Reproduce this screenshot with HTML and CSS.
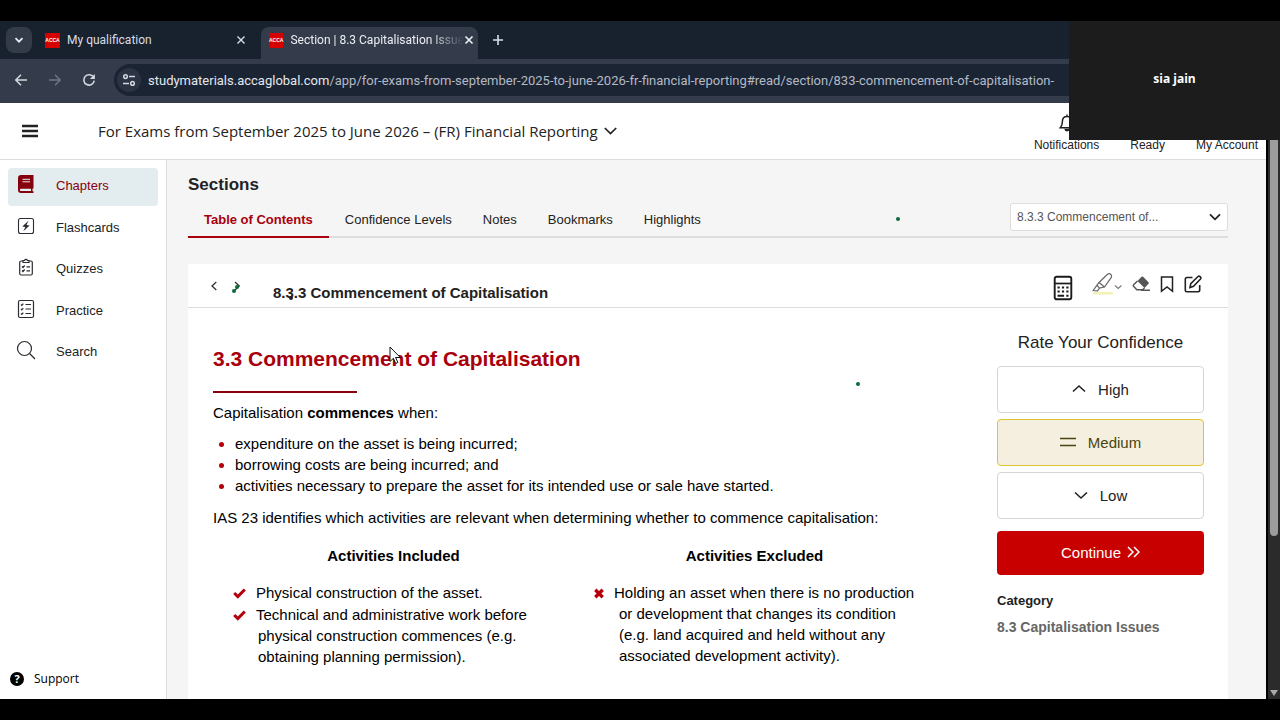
FILE: index.html
```
<!DOCTYPE html>
<html lang="en">
<head>
    <meta charset="UTF-8">
    <meta name="viewport" content="width=device-width, initial-scale=1.0">
    <title>Section | 8.3 Capitalisation Issues</title>
    <link rel="stylesheet" href="styles.css">
</head>

<body>
    <!-- Browser tabs -->
    <div class="tab-strip">
        <button class="tab-search" aria-label="Search tabs">
            <svg width="10" height="10" viewBox="0 0 10 10"><path d="M1.5 3.2 5 6.7 8.5 3.2" fill="none" stroke="#e8ebf0" stroke-width="1.8"/></svg>
        </button>
        <div class="browser-tab">
            <span class="favicon">ACCA</span>
            <span class="tab-title">My qualification</span>
            <button class="plain" aria-label="Close tab">
                <svg width="10" height="10" viewBox="0 0 10 10"><path d="M1.5 1.5l7 7M8.5 1.5l-7 7" stroke="#d9dde4" stroke-width="1.4"/></svg>
            </button>
        </div>
        <div class="browser-tab active">
            <span class="favicon">ACCA</span>
            <span class="tab-title">Section | 8.3 Capitalisation Issue</span>
            <button class="plain" aria-label="Close tab">
                <svg width="10" height="10" viewBox="0 0 10 10"><path d="M1.5 1.5l7 7M8.5 1.5l-7 7" stroke="#f0f2f5" stroke-width="1.6"/></svg>
            </button>
        </div>
        <button class="plain new-tab" aria-label="New tab">
            <svg width="12" height="12" viewBox="0 0 12 12"><path d="M6 1v10M1 6h10" stroke="#d9dde4" stroke-width="1.6"/></svg>
        </button>
    </div>

    <!-- Address bar -->
    <div class="toolbar">
        <button class="plain" aria-label="Back">
            <svg width="14" height="14" viewBox="0 0 14 14"><path d="M13 7H2M7 1.8 1.8 7 7 12.2" fill="none" stroke="#d3d8e0" stroke-width="1.5"/></svg>
        </button>
        <button class="plain" aria-label="Forward">
            <svg width="14" height="14" viewBox="0 0 14 14"><path d="M1 7h11M7 1.8 12.2 7 7 12.2" fill="none" stroke="#6d7685" stroke-width="1.5"/></svg>
        </button>
        <button class="plain" aria-label="Reload">
            <svg width="14" height="14" viewBox="0 0 14 14"><path d="M11.7 4.6A5.2 5.2 0 1 0 12.2 7.6" fill="none" stroke="#d3d8e0" stroke-width="1.6"/><path d="M12.9 1v5H7.9z" fill="#d3d8e0"/></svg>
        </button>
        <div class="address">
            <button class="site-info" aria-label="Site information">
                <svg width="14" height="14" viewBox="0 0 14 14" fill="none" stroke="#d3d8e0" stroke-width="1.5"><circle cx="3.5" cy="3.6" r="1.8"/><path d="M7 3.6h6M1 10.4h6"/><circle cx="10.5" cy="10.4" r="1.8"/></svg>
            </button>
            <div class="url"><b>studymaterials.accaglobal.com</b>/app/for-exams-from-september-2025-to-june-2026-fr-financial-reporting#read/section/833-commencement-of-capitalisation-</div>
        </div>
    </div>

    <div class="viewport">
        <div class="app">
            <header class="app-header">
                <button class="plain menu" aria-label="Menu">
                    <svg width="16" height="14" viewBox="0 0 16 14"><path d="M0 2h16M0 7h16M0 12h16" stroke="#222" stroke-width="2.4"/></svg>
                </button>
                <button class="plain course">
                    For Exams from September 2025 to June 2026 – (FR) Financial Reporting
                    <svg width="13" height="8" viewBox="0 0 13 8"><path d="M.8 1 6.5 6.6 12.2 1" fill="none" stroke="#222" stroke-width="1.7"/></svg>
                </button>
                <div class="account">
                    <a href="#">
                        <svg width="16" height="18" viewBox="0 0 16 18" fill="none" stroke="#222" stroke-width="1.5"><path d="M8 2.4c-3 0-4.6 2.2-4.6 5 0 3.4-.9 4.9-2.1 6.3h13.4c-1.2-1.4-2.1-2.9-2.1-6.3 0-2.8-1.6-5-4.6-5zM8 .6v2"/><path d="M6.3 15.5c.4 1.6 3 1.6 3.4 0z" fill="#222"/></svg>
                        Notifications
                    </a>
                    <a href="#">Ready</a>
                    <a href="#">My Account</a>
                </div>
            </header>

            <div class="app-body">
                <!-- Sidebar -->
                <aside class="sidebar">
                    <nav>
                        <a class="current" href="#">
                            <svg width="20" height="20" viewBox="0 0 20 20"><path d="M5 1h12.5v13.5h-1v2.8h1V19H5a3 3 0 0 1-3-3V4a3 3 0 0 1 3-3z" fill="#86000d"/><path d="M6.5 5.3h7.5M6.5 7.8h7.5" stroke="#e3ecee"/><path d="M5 14.8h10v2.3H5a1.1 1.1 0 0 1 0-2.300z" fill="#e3ecee"/></svg>
                            Chapters
                        </a>
                        <a href="#">
                            <svg width="20" height="20" viewBox="0 0 20 20"><rect x="2.5" y="2.5" width="15" height="15" rx="2" fill="none" stroke="#2b2b33" stroke-width="1.1"/><path d="M12.500 4.800 6.300 10.500l3 .4-2 4.400 6.300-5.900-3.100-.5z" fill="#2b2b33"/></svg>
                            Flashcards
                        </a>
                        <a href="#">
                            <svg width="20" height="20" viewBox="0 0 20 20" fill="none" stroke="#2b2b33" stroke-width="1.2"><path d="M7 4H5.200A1.500 1.500 0 0 0 3.700 5.500v11A1.500 1.500 0 0 0 5.200 18h9.600a1.500 1.500 0 0 0 1.500-1.500v-11A1.500 1.500 0 0 0 14.800 4H13M7 5.500V3.500h1.500a1.600 1.600 0 0 1 3 0H13v2zM6 9.500l1 1 1.700-2M10.500 9.800H14M6 13.500l1 1 1.700-2M10.500 13.800H14"/></svg>
                            Quizzes
                        </a>
                        <a href="#">
                            <svg width="20" height="20" viewBox="0 0 20 20" fill="none" stroke="#2b2b33" stroke-width="1.2"><rect x="2.5" y="1.5" width="15" height="17" rx="1.5"/><path d="M5 5.500l.8.8 1.500-1.700M9.500 5.500H15M5 10l.8.8 1.500-1.700M9.500 10H15M5 14.500l.8.8 1.500-1.700M9.500 14.500H15"/></svg>
                            Practice
                        </a>
                        <a href="#">
                            <svg width="20" height="20" viewBox="0 0 20 20" fill="none" stroke="#2b2b33" stroke-width="1.2"><circle cx="8.5" cy="8.5" r="7"/><path d="M13.5 13.5l5.500 5.500"/></svg>
                            Search
                        </a>
                    </nav>
                    <a class="support" href="#"><span class="help">?</span>Support</a>
                </aside>

                <main>
                    <h1>Sections</h1>
                    <div class="tabs">
                        <a class="selected" href="#">Table of Contents</a>
                        <a href="#">Confidence Levels</a>
                        <a href="#">Notes</a>
                        <a href="#">Bookmarks</a>
                        <a href="#">Highlights</a>
                        <div class="section-select">
                            <select aria-label="Section">
                                <option>8.3.3 Commencement of...</option>
                            </select>
                            <svg width="12" height="8" viewBox="0 0 12 8"><path d="M1 1.3 6 6.3 11 1.3" fill="none" stroke="#222" stroke-width="1.8"/></svg>
                        </div>
                    </div>

                    <article class="card">
                        <div class="card-header">
                            <div class="pager">
                                <button class="plain" aria-label="Previous section">
                                    <svg width="8" height="10" viewBox="0 0 8 10"><path d="M6.3 1 2 5l4.3 4" fill="none" stroke="#333" stroke-width="1.3"/></svg>
                                </button>
                                <button class="plain" aria-label="Next section">
                                    <svg width="8" height="10" viewBox="0 0 8 10"><path d="M2 1l4.3 4L2 9" fill="none" stroke="#333" stroke-width="1.3"/></svg>
                                </button>
                            </div>
                            <h2>8.3.3 Commencement of Capitalisation</h2>
                            <div class="tools">
                                <button class="plain calculator" aria-label="Calculator">
                                    <svg width="20" height="26" viewBox="0 0 20 26"><rect x="1.7" y="1.7" width="16.6" height="22.6" rx="2" fill="none" stroke="#1b1b1b" stroke-width="1.9"/><path d="M2 8.500h16" stroke="#1b1b1b" stroke-width="1.7"/><path d="M4.500 12.500h2.200M8.900 12.500h2.200M13.300 12.500h2.200M4.500 16.500h2.200M8.900 16.500h2.200M13.300 16.500h2.200M4.500 20.700h6.600M13.300 20.700h2.200" stroke="#1b1b1b" stroke-width="2"/></svg>
                                </button>
                                <button class="plain highlighter" aria-label="Highlight">
                                    <svg width="30" height="24" viewBox="0 0 30 24"><path d="M1 20h20v2.500H1z" fill="#f5f0b8"/><path d="M7 10.500 15.500 2.200q1.700-1.200 3.200 0t.6 3.200L12.500 15l-5 1.200L5 13.200zM5 13.200l-3.800 5.300 4.300.3 2-2.600M7 10.500l5.500 4.500" fill="none" stroke="#666" stroke-width="1.2"/><path d="M23 13.500l3.200 3 3.200-3" fill="none" stroke="#777" stroke-width="1.1"/></svg>
                                </button>
                                <button class="plain" aria-label="Erase">
                                    <svg width="18" height="18" viewBox="0 0 18 18"><path d="M9.500 1.800q.8-.7 1.600 0l5.400 5.500q.7.800 0 1.500L12.500 13 5.500 6z" fill="#555"/><path d="M5.500 6 1.600 9.700q-.7.800 0 1.600l3.200 3.400H10.500l2-1.700M9 15.200h9" fill="none" stroke="#555" stroke-width="1.4"/></svg>
                                </button>
                                <button class="plain" aria-label="Bookmark">
                                    <svg width="14" height="18" viewBox="0 0 14 18"><path d="M1.500 2h11v14.300L7 12l-5.500 4.300z" fill="none" stroke="#222" stroke-width="1.5"/></svg>
                                </button>
                                <button class="plain" aria-label="Add note">
                                    <svg width="18" height="18" viewBox="0 0 18 18" fill="none" stroke="#222" stroke-width="1.6"><path d="M8.500 2.500H3a1.700 1.700 0 0 0-1.700 1.700V15A1.700 1.700 0 0 0 3 16.700h11a1.700 1.700 0 0 0 1.700-1.700v-5M6 12.500l.8-3.800 7.200-7.200q1-.8 2 .1l.5.5q.8 1 0 1.900L9.500 11.300z"/></svg>
                                </button>
                            </div>
                        </div>

                        <div class="card-body">
                            <section class="content">
                                <h3>3.3 Commencement of Capitalisation</h3>
                                <p>Capitalisation <b>commences</b> when:</p>
                                <ul>
                                    <li>expenditure on the asset is being incurred;</li>
                                    <li>borrowing costs are being incurred; and</li>
                                    <li>activities necessary to prepare the asset for its intended use or sale have started.</li>
                                </ul>
                                <p>IAS 23 identifies which activities are relevant when determining whether to commence capitalisation:</p>
                                <table>
                                    <tr>
                                        <th>Activities Included</th>
                                        <th>Activities Excluded</th>
                                    </tr>
                                    <tr>
                                        <td>
                                            <div class="mark-item"><svg width="13" height="12" viewBox="0 0 13 12"><path d="M1.2 6 4.8 9.6 11.8 2.5" fill="none" stroke="#b5000c" stroke-width="3"/></svg>Physical construction of the asset.</div>
                                            <div class="mark-item"><svg width="13" height="12" viewBox="0 0 13 12"><path d="M1.2 6 4.8 9.6 11.8 2.5" fill="none" stroke="#b5000c" stroke-width="3"/></svg>Technical and administrative work before physical construction commences (e.g. obtaining planning permission).</div>
                                        </td>
                                        <td>
                                            <div class="mark-item"><svg width="10" height="12" viewBox="0 0 10 12"><path d="M1.3 2.8l7.400 7.400M8.700 2.800l-7.400 7.400" stroke="#b5000c" stroke-width="3.4"/></svg>Holding an asset when there is no production or development that changes its condition (e.g. land acquired and held without any associated development activity).</div>
                                        </td>
                                    </tr>
                                </table>
                            </section>

                            <section class="confidence">
                                <h4>Rate Your Confidence</h4>
                                <button class="rate">
                                    <svg width="14" height="14" viewBox="0 0 14 14"><path d="M1 8.500l6-5.500L13 8.500" fill="none" stroke="#222" stroke-width="1.6"/></svg>
                                    High
                                </button>
                                <button class="rate medium">
                                    <svg width="16" height="14" viewBox="0 0 16 14"><path d="M0 2.500h16M0 9.500h16" stroke="#4a4410" stroke-width="1.4"/></svg>
                                    Medium
                                </button>
                                <button class="rate">
                                    <svg width="14" height="14" viewBox="0 0 14 14"><path d="M1 3.500 7 9l6-5.500" fill="none" stroke="#222" stroke-width="1.6"/></svg>
                                    Low
                                </button>
                                <button class="continue">
                                    Continue
                                    <svg width="13" height="12" viewBox="0 0 13 12"><path d="M1 1l5 5-5 5M7 1l5 5-5 5" fill="none" stroke="#fff" stroke-width="1.5"/></svg>
                                </button>
                                <h5>Category</h5>
                                <a class="category" href="#">8.3 Capitalisation Issues</a>
                            </section>
                        </div>
                    </article>
                </main>
            </div>
        </div>

        <div class="scrollbar">
            <div class="thumb"></div>
            <div class="arrow"></div>
        </div>
    </div>

    <!-- Call participant over the shared screen -->
    <div class="participant">sia jain</div>

    <!-- Pointer marks -->
    <span class="dot dot-tabs"></span>
    <span class="dot dot-page"></span>
    <span class="dot dot-next"></span>
    <span class="dot dot-next-tip"></span>
    <span class="dot dot-title"></span>
    <svg class="cursor" width="13" height="19" viewBox="0 0 13 19"><path d="M1 1v14.500l3.400-3.200 2.300 5.200 2.200-1-2.300-5h4.700z" fill="#fff" stroke="#111"/></svg>
</body>
</html>
```
FILE: styles.css
```
* {
    margin: 0;
    padding: 0;
    box-sizing: border-box;
}

body {
    position: relative;
    display: flex;
    flex-direction: column;
    height: 100vh;
    padding: 21px 0;
    overflow: hidden;
    background-color: #000;
    color: #222;
    font-family: "Liberation Sans", Arial, sans-serif;
    font-size: 13px;
}

a {
    color: inherit;
    text-decoration: none;
}

button,
select {
    font: inherit;
    color: inherit;
    cursor: pointer;
}

svg {
    flex: none;
}

.plain {
    display: flex;
    align-items: center;
    background: none;
    border: none;
}

/* Browser tabs */
.tab-strip {
    display: flex;
    align-items: center;
    flex: none;
    height: 38px;
    padding-left: 6px;
    background-color: #18212e;
    color: #d9dde4;
    font-family: Roboto, sans-serif;
    font-size: 12px;
}

.tab-search {
    display: flex;
    align-items: center;
    justify-content: center;
    width: 26px;
    height: 26px;
    margin-right: 5px;
    border: none;
    border-radius: 8px;
    background-color: #333a48;
}

.browser-tab {
    display: flex;
    align-items: center;
    width: 217px;
    height: 32px;
    margin-top: 6px;
    padding: 0 8px 6px 8px;
    border-radius: 8px 8px 0 0;
}

.browser-tab.active {
    margin-left: 7px;
    background-color: #343b4a;
    color: #eceff4;
}

.favicon {
    width: 15px;
    margin-right: 7px;
    background-color: #d50000;
    color: #fff;
    font-family: "Liberation Sans", Arial, sans-serif;
    font-size: 5px;
    font-weight: bold;
    line-height: 15px;
    text-align: center;
}

.tab-title {
    flex: 1;
    white-space: nowrap;
}

.active .tab-title {
    -webkit-mask-image: linear-gradient(to right, #000 80%, transparent);
    mask-image: linear-gradient(to right, #000 80%, transparent);
}

.new-tab {
    margin-left: 14px;
}

/* Address bar */
.toolbar {
    display: flex;
    align-items: center;
    flex: none;
    gap: 20px;
    height: 44px;
    padding: 0 0 2px 14px;
    background-color: #343b4a;
}

.address {
    display: flex;
    align-items: center;
    flex: 1;
    height: 32px;
    gap: 7px;
    overflow: hidden;
    margin-left: -2px;
    padding-left: 3px;
    border-radius: 16px 0 0 16px;
    background-color: #1b2433;
}

.site-info {
    display: flex;
    align-items: center;
    justify-content: center;
    flex: none;
    width: 24px;
    height: 24px;
    border: none;
    border-radius: 12px;
    background-color: #2c3444;
}

.url {
    color: #b3bac6;
    font-family: Roboto, sans-serif;
    font-size: 13px;
    white-space: nowrap;
}

.url b {
    color: #e4e8ee;
    font-weight: normal;
}

/* Page */
.viewport {
    display: flex;
    flex: 1;
    min-height: 0;
}

.app {
    display: flex;
    flex: 1;
    flex-direction: column;
    min-width: 0;
    background-color: #fff;
}

.app-header {
    display: flex;
    align-items: center;
    flex: none;
    height: 57px;
    padding: 0 8px 0 22px;
    border-bottom: 1px solid #ddd;
}

.menu {
    margin-right: 60px;
}

.course {
    gap: 6px;
    font-family: "Open Sans", sans-serif;
    font-size: 15px;
}

.account {
    display: flex;
    align-items: flex-end;
    align-self: flex-end;
    gap: 31px;
    margin-left: auto;
    padding-bottom: 7px;
    font-size: 12px;
}

.account a {
    display: flex;
    flex-direction: column;
    align-items: center;
    gap: 6px;
}

.app-body {
    display: flex;
    flex: 1;
    min-height: 0;
}

/* Sidebar */
.sidebar {
    display: flex;
    flex-direction: column;
    justify-content: space-between;
    width: 167px;
    padding: 8px 8px 10px;
    border-right: 1px solid #ddd;
}

.sidebar nav {
    display: flex;
    flex-direction: column;
    justify-content: space-between;
    height: 204px;
}

.sidebar nav a {
    display: flex;
    align-items: center;
    gap: 20px;
    height: 38px;
    padding: 0 0 3px 8px;
    border-radius: 4px;
}

.sidebar nav svg {
    margin-bottom: 3px;
}

.sidebar nav .current {
    background-color: #e3ecee;
    color: #86000d;
}

.support {
    display: flex;
    align-items: center;
    gap: 10px;
    padding: 0 0 2px 2px;
    color: #000;
    font-family: "Open Sans", sans-serif;
    font-size: 12px;
}

.help {
    width: 14px;
    border-radius: 7px;
    background-color: #000;
    color: #fff;
    font-size: 11px;
    font-weight: bold;
    line-height: 14px;
    text-align: center;
}

/* Sections */
main {
    display: flex;
    flex: 1;
    flex-direction: column;
    min-width: 0;
    padding: 15px 38px 0 21px;
    background-color: #f5f5f5;
}

h1 {
    font-size: 17px;
    line-height: 20px;
}

.tabs {
    display: flex;
    flex: none;
    height: 43px;
    margin-bottom: 26px;
    border-bottom: 2px solid #ddd;
}

.tabs a {
    height: 43px;
    padding: 0 16px;
    line-height: 49px;
}

.tabs a + a {
    padding: 0 15px 0 16px;
}

.tabs .selected {
    border-bottom: 2px solid #a8000c;
    color: #a8000c;
    font-weight: bold;
}

.section-select {
    position: relative;
    width: 218px;
    margin: 8px 0 0 auto;
}

.section-select select {
    width: 100%;
    height: 28px;
    padding-left: 6px;
    appearance: none;
    border: 1px solid #ddd;
    border-radius: 3px;
    background-color: #fff;
    color: #555;
    font-size: 12px;
}

.section-select svg {
    position: absolute;
    top: 10px;
    right: 7px;
    pointer-events: none;
}

/* Card */
.card {
    flex: 1;
    background-color: #fff;
}

.card-header {
    display: flex;
    height: 44px;
    padding: 0 26px 0 22px;
    border-bottom: 1px solid #ddd;
}

.pager {
    display: flex;
    gap: 15px;
    width: 63px;
    height: 44px;
}

h2 {
    font-size: 15px;
    line-height: 58px;
}

.tools {
    display: flex;
    align-items: center;
    gap: 10px;
    height: 40px;
    margin-left: auto;
}

.calculator {
    margin: 8px 9px 0 0;
}

/* Section text */
.card-body {
    display: grid;
    grid-template-columns: 1fr 207px;
    gap: 62px;
    padding: 24px 24px 0 25px;
}

.content {
    color: #000;
    font-size: 15px;
    line-height: 21px;
}

.content h3 {
    margin: 14px 0 9px;
    color: #a8000c;
    font-size: 21px;
    line-height: 26px;
}

.content h3::after {
    content: "";
    display: block;
    width: 144px;
    height: 2px;
    margin-top: 19px;
    background-color: #8b0010;
}

.content ul {
    margin: 10px 0 11px;
    padding-left: 22px;
}

.content li::marker {
    color: #b5000c;
}

.content table {
    width: 100%;
    margin-top: 17px;
    border-collapse: collapse;
    table-layout: fixed;
}

.content th {
    padding-bottom: 16px;
}

.content td {
    padding: 0 10px 0 45px;
    vertical-align: top;
}

.mark-item {
    margin-bottom: 1px;
    text-indent: -25px;
}

.mark-item svg {
    margin-right: 10px;
    vertical-align: -1px;
}

/* Confidence */
.confidence {
    display: flex;
    flex-direction: column;
    gap: 6px;
    font-size: 15px;
}

.confidence h4 {
    margin-bottom: 6px;
    font-size: 17px;
    font-weight: normal;
    line-height: 22px;
    text-align: center;
}

.rate,
.continue {
    display: flex;
    align-items: center;
    justify-content: center;
    gap: 12px;
    height: 47px;
    border: 1px solid #d5d5d5;
    border-radius: 4px;
    background-color: #fff;
}

.rate.medium {
    border-color: #dcc52f;
    background-color: #f5efdf;
    color: #4a4410;
}

.continue {
    gap: 6px;
    height: 44px;
    margin: 6px 0 10px;
    padding-bottom: 2px;
    border: none;
    background-color: #c80000;
    color: #fff;
}

.confidence h5 {
    font-size: 13px;
    line-height: 20px;
}

.category {
    color: #666;
    font-size: 14px;
    font-weight: bold;
    line-height: 20px;
}

/* Scrollbar */
.scrollbar {
    display: flex;
    flex-direction: column;
    align-items: center;
    justify-content: space-between;
    width: 14px;
    padding-bottom: 3px;
    border-left: 2px solid #000;
    background-color: #2b2b2b;
}

.thumb {
    width: 8px;
    height: 73%;
    border-radius: 4px;
    background-color: #9c9c9c;
}

.arrow {
    border: 4px solid transparent;
    border-top: 6px solid #aaa;
    border-bottom: none;
}

/* Overlays */
.participant {
    position: absolute;
    top: 21px;
    right: 0;
    width: 211px;
    height: 119px;
    background-color: #1c1c1c;
    color: #fff;
    font-family: "Open Sans", sans-serif;
    font-size: 12px;
    font-weight: bold;
    line-height: 116px;
    text-align: center;
}

.dot {
    position: absolute;
    width: 4px;
    height: 4px;
    border-radius: 2px;
    background-color: #0c6b3a;
}

.dot-tabs {
    top: 217px;
    left: 896px;
}

.dot-page {
    top: 382px;
    left: 856px;
}

.dot-next {
    top: 289px;
    left: 232px;
}

.dot-next-tip {
    top: 285px;
    left: 235px;
}

.dot-title {
    top: 296px;
    left: 289px;
    background-color: #222;
}

.cursor {
    position: absolute;
    top: 346px;
    left: 389px;
}
```
